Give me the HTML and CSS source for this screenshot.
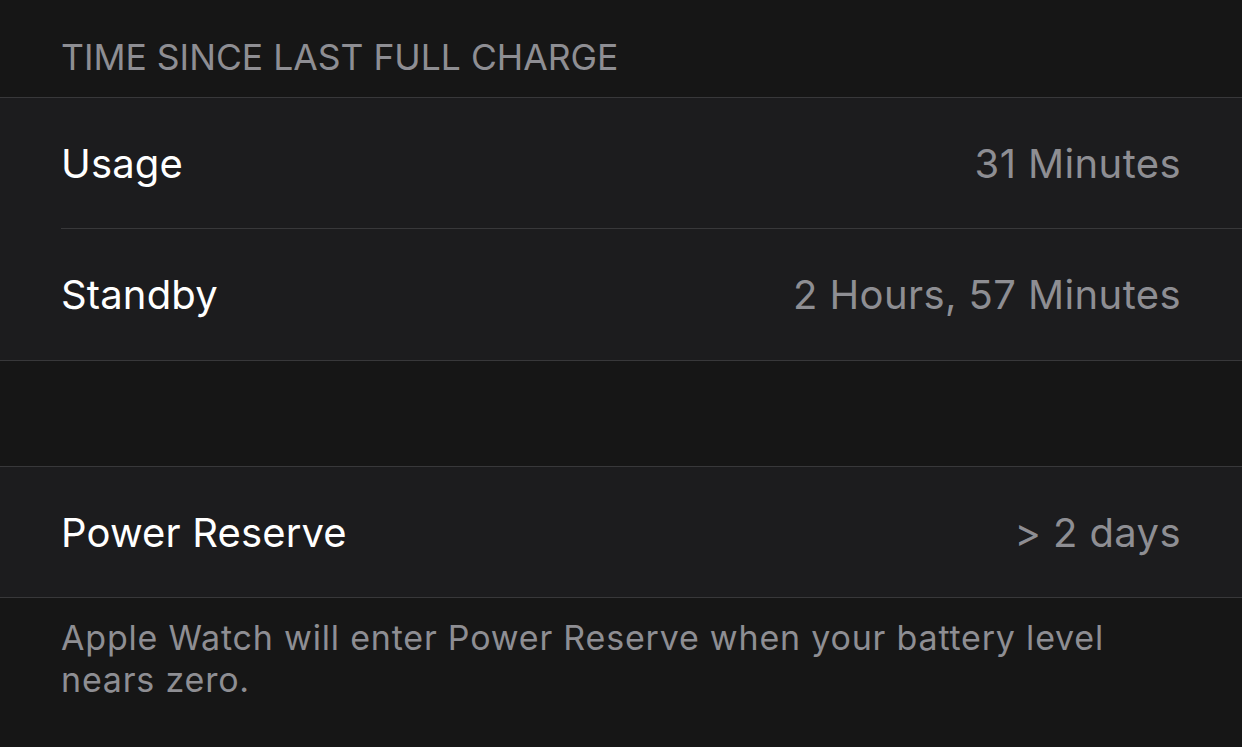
FILE: index.html
```html
<!DOCTYPE html>
<html>
<head>
<meta charset="utf-8">
<link rel="stylesheet" href="styles.css">
</head>
<body>
<div class="header">TIME SINCE LAST FULL CHARGE</div>
<div class="group">
  <div class="row"><span class="label">Usage</span><span class="value">31 Minutes</span></div>
  <div class="row"><span class="label">Standby</span><span class="value">2 Hours, 57 Minutes</span></div>
</div>
<div class="spacer"></div>
<div class="group">
  <div class="row"><span class="label">Power Reserve</span><span class="value">&gt; 2 days</span></div>
</div>
<div class="footer">Apple Watch will enter Power Reserve when your battery level nears zero.</div>
</body>
</html>
```
FILE: styles.css
```css
html, body {
  margin: 0;
  padding: 0;
  background: #161616;
  width: 1242px;
  height: 747px;
  overflow: hidden;
  font-family: Inter, "Noto Sans", sans-serif;
}
.header {
  height: 97px;
  box-sizing: border-box;
  padding: 38px 61px 0;
  font-size: 35.5px;
  line-height: 40px;
  color: #8e8e93;
}
.group {
  background: #1c1c1e;
  border-top: 1px solid #38383a;
  border-bottom: 1px solid #38383a;
  padding-left: 61px;
}
.row {
  height: 130px;
  display: flex;
  align-items: center;
  justify-content: space-between;
  padding-right: 61px;
  font-size: 40px;
  letter-spacing: 0.15px;
}
.row + .row {
  height: 131px;
  border-top: 1px solid #38383a;
}
.label { color: #ffffff; }
.value { color: #8e8e93; letter-spacing: 0.4px; }
.spacer { height: 105px; }
.footer {
  padding: 19px 100px 0 61px;
  font-size: 34px;
  line-height: 42px;
  letter-spacing: 0.8px;
  color: #8e8e93;
}
```
